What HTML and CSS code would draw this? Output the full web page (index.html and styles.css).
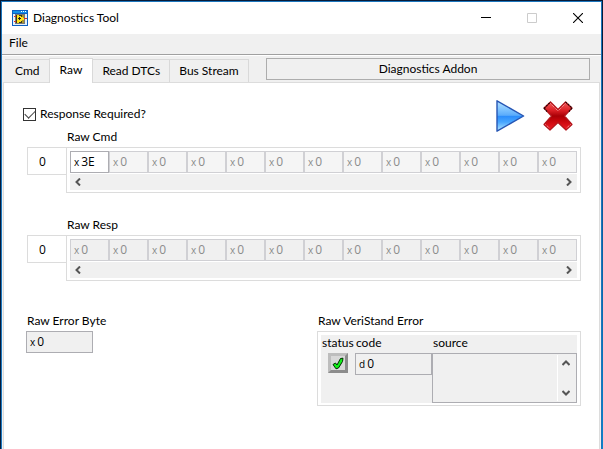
FILE: index.html
```html
<!DOCTYPE html>
<html lang="en">
<head>
<meta charset="utf-8">
<title>Diagnostics Tool</title>
<link rel="stylesheet" href="styles.css">
</head>
<body>
<div class="window">
  <header class="titlebar">
    <svg class="app-icon" width="16" height="16" viewBox="0 0 16 16" shape-rendering="crispEdges" aria-hidden="true">
      <path fill="#0b5fc4" d="M0 0h16v16H0z"/>
      <path fill="#1592ea" d="M1 1h14v2H1z"/>
      <path fill="#fff" d="M9 1h1v1H9zM11 1h1v1h-1zM13 1h1v1h-1z"/>
      <path fill="#e4f1fa" d="M1 4h14v11H1z"/>
      <path fill="#777" d="M3 4h10v10H3z"/>
      <path fill="#d9322a" d="M2 6h3v1H2zM2 11h3v1H2zM12 8h3v1h-3z"/>
      <path fill="#3d3a1a" d="M4 5h8v8H4z"/>
      <path fill="#a8952a" d="M10 5h2v3h-2zM10 10h2v3h-2z"/>
      <path fill="#ffe21c" d="M5 5h2v1h2v1h2v1h1v2h-2v1H9v1H7v1H5z"/>
      <path fill="#222" d="M6 8h3v1H6zM7 7h1v3H7z"/>
    </svg>
    <h1 class="title">Diagnostics Tool</h1>
    <button class="caption" type="button" aria-label="Minimize"><svg width="10" height="10" viewBox="0 0 10 10" shape-rendering="crispEdges"><path d="M0 4h10v1H0z"/></svg></button>
    <button class="caption" type="button" aria-label="Maximize" disabled><svg width="10" height="10" viewBox="0 0 10 10"><path d="M.5.5h9v9h-9z" fill="none" stroke="#ccc"/></svg></button>
    <button class="caption" type="button" aria-label="Close"><svg width="10" height="10" viewBox="0 0 10 10"><path d="M0 0l10 10M10 0L0 10" fill="none" stroke="#000" stroke-width="1.1"/></svg></button>
  </header>
  <nav class="menubar"><button class="menu" type="button">File</button></nav>
  <div class="tabstrip">
    <div class="tabs" role="tablist">
      <button class="tab" type="button" role="tab">Cmd</button>
      <button class="tab tab-active" type="button" role="tab" aria-selected="true">Raw</button>
      <button class="tab" type="button" role="tab">Read DTCs</button>
      <button class="tab" type="button" role="tab">Bus Stream</button>
    </div>
    <button class="addon" type="button">Diagnostics Addon</button>
  </div>
  <main class="panel">
    <div class="toolbar">
      <label class="check"><input type="checkbox" checked>Response Required?</label>
      <div class="actions">
        <button class="icon-button" type="button" aria-label="Run">
          <svg width="29" height="32" viewBox="0 0 29 32">
            <defs>
              <linearGradient id="play" x1="0" y1="0" x2="0" y2="1"><stop offset="0" stop-color="#b7e2ff"/><stop offset=".3" stop-color="#7cc2ff"/><stop offset=".48" stop-color="#5aabfb"/><stop offset=".5" stop-color="#2a8cfb"/><stop offset=".7" stop-color="#48a6ff"/><stop offset="1" stop-color="#b9eaff"/></linearGradient>
            </defs>
            <path d="M1 .8L27.6 16 1 31.2z" fill="url(#play)" stroke="#2756b4" stroke-width="1.4" stroke-linejoin="round"/>
          </svg>
        </button>
        <button class="icon-button" type="button" aria-label="Stop">
          <svg width="30" height="30" viewBox="0 0 30 30">
            <defs>
              <linearGradient id="stop" x1="0" y1="0" x2="0" y2="1"><stop offset="0" stop-color="#f35b5b"/><stop offset=".3" stop-color="#dc2026"/><stop offset=".5" stop-color="#a90006"/><stop offset=".65" stop-color="#c4050b"/><stop offset="1" stop-color="#f01d25"/></linearGradient>
            </defs>
            <path d="M7.5 1L15 8.5 22.5 1 29 7 21.5 15 29 23.5 23 29 15 21.5 7 29 1 23.5 8.5 15 1 7z" fill="url(#stop)" stroke="#b3151b" stroke-width="1.2" stroke-linejoin="round"/>
            <path d="M1 7.5L7.5 1M22.5 1L29 7M1 7l3 3.5M29 7l-3 3.5" fill="none" stroke="#260607" stroke-width="1.2" stroke-dasharray="2 1"/>
            <path d="M7.5 2.5L15 10 22.5 2.500M2.500 23.500L7 27.500M27.500 23.500L23 27.500" fill="none" stroke="#ffb0b0" stroke-width="1" stroke-dasharray="1 1"/>
          </svg>
        </button>
      </div>
    </div>

    <section class="array" aria-labelledby="cmd">
      <h2 class="array-label" id="cmd">Raw Cmd</h2>
      <input class="index" aria-label="Raw Cmd index" value="0">
      <div class="frame">
        <div class="cells">
          <label class="cell cell-set">x<input value="3E"></label>
          <label class="cell">x<input value="0"></label>
          <label class="cell">x<input value="0"></label>
          <label class="cell">x<input value="0"></label>
          <label class="cell">x<input value="0"></label>
          <label class="cell">x<input value="0"></label>
          <label class="cell">x<input value="0"></label>
          <label class="cell">x<input value="0"></label>
          <label class="cell">x<input value="0"></label>
          <label class="cell">x<input value="0"></label>
          <label class="cell">x<input value="0"></label>
          <label class="cell">x<input value="0"></label>
          <label class="cell">x<input value="0"></label>
        </div>
        <div class="scroll">
          <button class="arrow" type="button" aria-label="Scroll left"><svg width="6" height="8" viewBox="0 0 6 8"><path d="M5 .5L1.5 4 5 7.5"/></svg></button>
          <button class="arrow" type="button" aria-label="Scroll right"><svg width="6" height="8" viewBox="0 0 6 8"><path d="M1 .5L4.5 4 1 7.5"/></svg></button>
        </div>
      </div>
    </section>

    <section class="array" aria-labelledby="resp">
      <h2 class="array-label" id="resp">Raw Resp</h2>
      <input class="index" aria-label="Raw Resp index" value="0">
      <div class="frame">
        <div class="cells cells-readonly">
          <label class="cell">x<input value="0" readonly></label>
          <label class="cell">x<input value="0" readonly></label>
          <label class="cell">x<input value="0" readonly></label>
          <label class="cell">x<input value="0" readonly></label>
          <label class="cell">x<input value="0" readonly></label>
          <label class="cell">x<input value="0" readonly></label>
          <label class="cell">x<input value="0" readonly></label>
          <label class="cell">x<input value="0" readonly></label>
          <label class="cell">x<input value="0" readonly></label>
          <label class="cell">x<input value="0" readonly></label>
          <label class="cell">x<input value="0" readonly></label>
          <label class="cell">x<input value="0" readonly></label>
          <label class="cell">x<input value="0" readonly></label>
        </div>
        <div class="scroll">
          <button class="arrow" type="button" aria-label="Scroll left"><svg width="6" height="8" viewBox="0 0 6 8"><path d="M5 .5L1.5 4 5 7.5"/></svg></button>
          <button class="arrow" type="button" aria-label="Scroll right"><svg width="6" height="8" viewBox="0 0 6 8"><path d="M1 .5L4.5 4 1 7.5"/></svg></button>
        </div>
      </div>
    </section>

    <div class="results">
      <div class="error-byte">
        <label class="label" for="byte">Raw Error Byte</label>
        <div class="value">x<input id="byte" value="0" readonly></div>
      </div>
      <section class="error" aria-labelledby="err">
        <h2 class="label" id="err">Raw VeriStand Error</h2>
        <div class="frame">
          <div class="cluster">
            <span class="caption-text">status</span>
            <label class="caption-text" for="code">code</label>
            <label class="caption-text" for="source">source</label>
            <div class="led" role="img" aria-label="No error">
              <svg width="12" height="13" viewBox="0 0 12 13"><path d="M1 7.5L3.5 6 5 8 8.5 1.5 11 1.2 10.5 4.5 6.5 11 4 11.8z" fill="#10f018" stroke="#002c00" stroke-width="1"/></svg>
            </div>
            <div class="value">d<input id="code" value="0" readonly></div>
            <div class="source">
              <textarea id="source" readonly></textarea>
              <div class="source-scroll">
                <button class="arrow" type="button" aria-label="Scroll up"><svg width="8" height="6" viewBox="0 0 8 6"><path d="M.5 5L4 1.5 7.5 5"/></svg></button>
                <button class="arrow" type="button" aria-label="Scroll down"><svg width="8" height="6" viewBox="0 0 8 6"><path d="M.5 1L4 4.5 7.5 1"/></svg></button>
              </div>
            </div>
          </div>
        </div>
      </section>
    </div>
  </main>
</div>
</body>
</html>
```
FILE: styles.css
```css
* { box-sizing: border-box; }

body {
  margin: 0;
  background: linear-gradient(#071b38 10%, #0a4f8c 30%, #0a84cc) right / 1px 100% no-repeat #071b38;
  color: #000;
  font: 12px/16px Lato, "Open Sans", sans-serif;
}

button, input, textarea {
  margin: 0;
  padding: 0;
  border: 0;
  border-radius: 0;
  background: transparent;
  color: inherit;
  font: inherit;
}

h1, h2 { margin: 0; font: inherit; }
svg { display: block; }

.window {
  display: flex;
  flex-direction: column;
  min-height: calc(100vh - 1px);
  margin: 1px 1px 0;
  border: 1px solid #1b76bd;
  border-bottom: 0;
  background: #f0f0f0;
}

.titlebar {
  display: flex;
  align-items: center;
  height: 32px;
  padding-left: 10px;
  background: #fff;
}
.title { flex: 1; margin-left: 5px; }
.caption {
  display: grid;
  place-items: center;
  width: 46px;
  height: 30px;
}

.menubar {
  height: 21px;
  border-bottom: 1px solid #a0a0a0;
  box-shadow: 0 1px #fff;
}
.menu { padding: 1px 7px; }

.tabstrip {
  display: flex;
  align-items: flex-end;
  justify-content: space-between;
  height: 27px;
  padding: 0 11px 0 3px;
}
.tabs { display: flex; align-items: flex-end; }
.tab {
  height: 23px;
  padding: 0 9px;
  border: 1px solid #d9d9d9;
  border-width: 1px 1px 0 0;
}
.tab:first-child { padding-left: 10px; }
.tab-active {
  z-index: 1;
  height: 25px;
  margin: 0 0 -1px -1px;
  padding: 0 10px 2px;
  border-left-width: 1px;
  background: #fff;
}
.addon {
  flex: 0 1 324px;
  height: 22px;
  margin-bottom: 2px;
  border: 1px solid #adadad;
}

.panel {
  flex: 1;
  margin: 0 1px;
  padding: 17px 18px 0 23px;
  border: 1px solid #dcdcdc;
  border-bottom: 0;
  background: #fff;
}

.toolbar {
  display: flex;
  justify-content: space-between;
  height: 29px;
}
.check {
  display: flex;
  align-items: center;
  height: 28px;
  gap: 4px;
  margin-left: -4px;
}
.check input {
  appearance: none;
  display: grid;
  place-items: center;
  width: 13px;
  height: 13px;
  border: 1px solid #333;
  background: #fff;
}
.check input:checked::before {
  content: "";
  width: 9px;
  height: 5px;
  margin-top: -2px;
  border: solid #444;
  border-width: 0 0 1px 1px;
  transform: rotate(-45deg);
}
.actions { display: flex; gap: 18px; padding-right: 8px; }
.icon-button { height: 32px; }

.array {
  display: grid;
  grid-template: 18px auto / 39px 1fr;
  margin-bottom: 24px;
}
.array-label { grid-column: 2; padding-left: 1px; }
.index {
  width: 40px;
  height: 28px;
  padding-left: 11px;
  border: 1px solid #dcdcdc;
}
.frame {
  padding: 3px 3px 2px;
  border: 1px solid #dcdcdc;
}
.cells {
  display: grid;
  grid-template-columns: repeat(13, 1fr);
}
.cell, .value {
  display: flex;
  align-items: center;
  height: 22px;
  padding-left: 3px;
  gap: 2px;
  border: 1px solid #d0d0d4;
  font-size: 10px;
}
.index, .cell, .value { font-family: "Open Sans", sans-serif; }
.cell { color: #8c8c8c; background: #f5f5f5; }
.cell input, .value input { width: 100%; min-width: 0; font-size: 12px; }
.cells-readonly .cell { background: #f0f0f0; }
.cells .cell-set { color: #000; background: #fff; border-color: #adadb2; }
.value { border-color: #adadb2; background: #f0f0f0; }

.scroll {
  display: flex;
  justify-content: space-between;
  height: 16px;
  margin-top: 1px;
  background: #f0f0f0;
}
.arrow {
  display: grid;
  place-items: center;
  width: 16px;
  height: 16px;
}
.arrow path { fill: none; stroke: #555; stroke-width: 2; }

.results { display: flex; justify-content: space-between; margin: 32px 0 0 -1px; }
.error-byte { width: 67px; }
.label { display: block; height: 18px; padding-left: 1px; white-space: nowrap; }
.error { width: 264px; }
.cluster {
  display: grid;
  grid-template: 18px 50px / 34px 77px minmax(0, 1fr);
  align-items: start;
  background: #f0f0f0;
}
.caption-text { padding-left: 1px; }
.led {
  display: grid;
  place-items: center;
  width: 20px;
  height: 20px;
  margin-left: 7px;
  border: 3px solid;
  border-color: #bdbdbd #8c8c8c #8c8c8c #bdbdbd;
  background: #d8d8d8;
}
.source {
  display: flex;
  height: 50px;
  border: 1px solid #adadb2;
}
.source textarea { flex: 1; min-width: 0; height: 48px; resize: none; }
.source-scroll {
  display: flex;
  flex-direction: column;
  justify-content: space-between;
  padding-right: 2px;
  margin: 1px 0;
  border-left: 1px solid #fff;
}
```
